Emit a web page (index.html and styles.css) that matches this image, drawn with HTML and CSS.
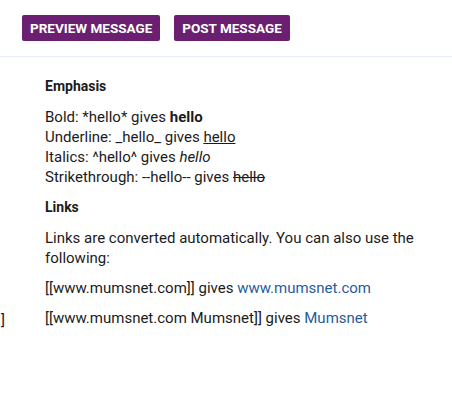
FILE: index.html
```html
<!DOCTYPE html>
<html>
<head>
<meta charset="utf-8">
<link rel="stylesheet" href="styles.css">
</head>
<body>
<div class="toolbar">
  <button class="btn">PREVIEW MESSAGE</button>
  <button class="btn">POST MESSAGE</button>
</div>
<div class="help">
  <span class="stray">]</span>
  <h4 class="title">Emphasis</h4>
  <p class="para">Bold: *hello* gives <b>hello</b><br>
  Underline: _hello_ gives <u>hello</u><br>
  Italics: ^hello^ gives <i>hello</i><br>
  Strikethrough: --hello-- gives <s>hello</s></p>
  <h4 class="title">Links</h4>
  <p class="para">Links are converted automatically. You can also use the following:</p>
  <p class="para">[[www.mumsnet.com]] gives <a class="link" href="#">www.mumsnet.com</a></p>
  <p class="para">[[www.mumsnet.com Mumsnet]] gives <a class="link" href="#">Mumsnet</a></p>
</div>
</body>
</html>
```
FILE: styles.css
```css
html, body {
  margin: 0;
  padding: 0;
  background: #ffffff;
  font-family: Roboto, "Liberation Sans", sans-serif;
  color: #1b1b1b;
}
.toolbar {
  display: flex;
  gap: 14px;
  padding: 15px 22px 15px;
  border-bottom: 1px solid #e6edf5;
}
.btn {
  height: 26px;
  padding: 0 8px;
  border: none;
  border-radius: 2px;
  background: #6b1f70;
  color: #ffffff;
  font-family: Roboto, "Liberation Sans", sans-serif;
  font-weight: 700;
  font-size: 13.5px;
  letter-spacing: 0;
  cursor: pointer;
}
.help {
  position: relative;
  padding: 19px 20px 0 45px;
}
.stray {
  position: absolute;
  left: 1px;
  top: 253px;
  font-size: 15px;
  line-height: 20px;
}
.title {
  margin: 0 0 11px;
  font-size: 14px;
  line-height: 20px;
  font-weight: 700;
}
.para {
  margin: 0 0 10px;
  font-size: 15px;
  line-height: 20px;
}
.link {
  color: #1f5d9c;
  text-decoration: none;
}
```
